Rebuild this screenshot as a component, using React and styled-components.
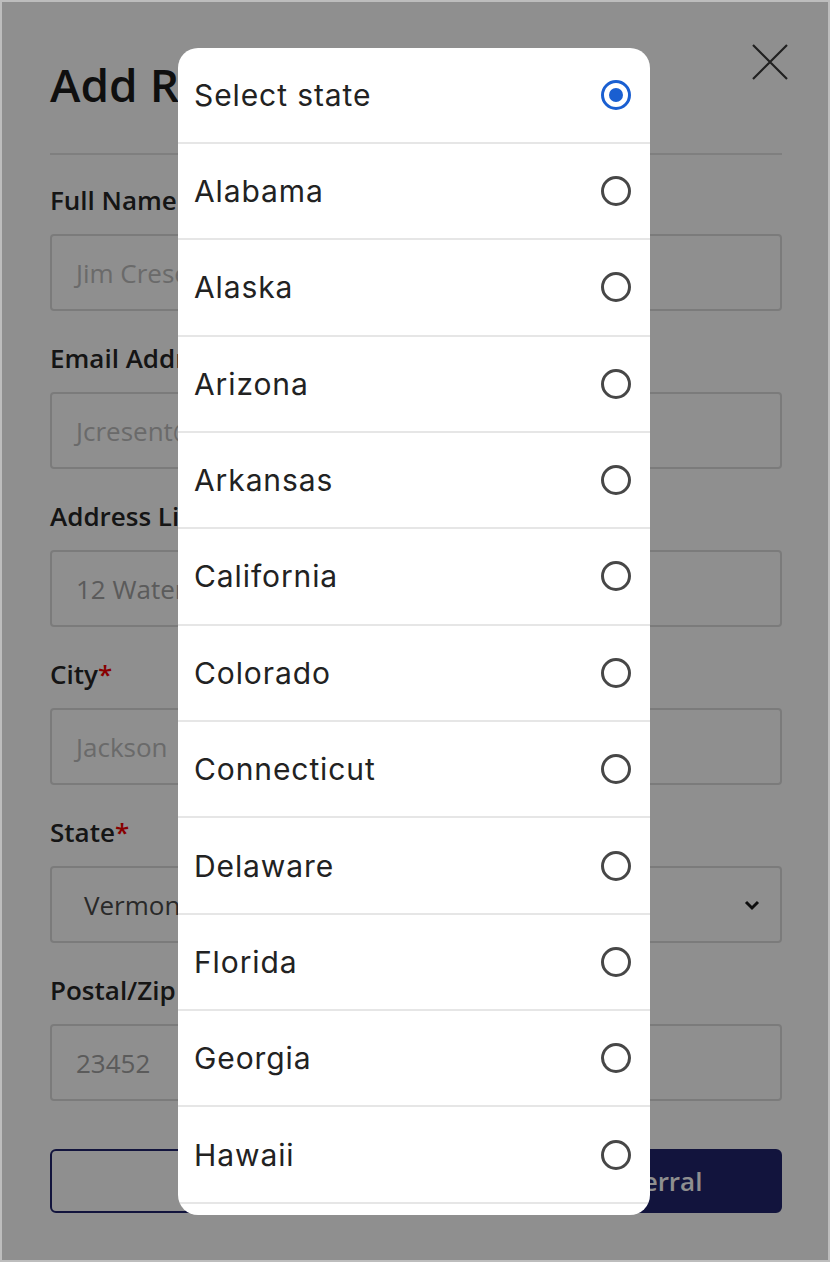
import React, { useState } from 'react';
import styled, { createGlobalStyle } from 'styled-components';

const GlobalStyle = createGlobalStyle`
  * { box-sizing: border-box; }
  body {
    margin: 0;
    background: #ffffff;
    font-family: 'Open Sans', 'Noto Sans', sans-serif;
  }
`;

const STATES = [
  'Alabama', 'Alaska', 'Arizona', 'Arkansas', 'California', 'Colorado',
  'Connecticut', 'Delaware', 'Florida', 'Georgia', 'Hawaii', 'Idaho',
  'Illinois', 'Indiana', 'Iowa', 'Kansas', 'Kentucky', 'Louisiana', 'Maine',
  'Maryland', 'Massachusetts', 'Michigan', 'Minnesota', 'Mississippi',
  'Missouri', 'Montana', 'Nebraska', 'Nevada', 'New Hampshire', 'New Jersey',
  'New Mexico', 'New York', 'North Carolina', 'North Dakota', 'Ohio',
  'Oklahoma', 'Oregon', 'Pennsylvania', 'Rhode Island', 'South Carolina',
  'South Dakota', 'Tennessee', 'Texas', 'Utah', 'Vermont', 'Virginia',
  'Washington', 'West Virginia', 'Wisconsin', 'Wyoming',
];

const FIELDS = [
  { label: 'Full Name', placeholder: 'Jim Cresent' },
  { label: 'Email Address', placeholder: 'Jcresent@gmail.com' },
  { label: 'Address Line 1', placeholder: '12 Waterfront Street', filled: true },
  { label: 'City', placeholder: 'Jackson', required: true },
];

const Frame = styled.div`
  position: relative;
  width: 830px;
  height: 1262px;
  border: 2px solid #bdbdbd;
  overflow: hidden;
  background: #ffffff;
`;

const Page = styled.div`
  padding: 42px 46px 0 48px;
`;

const Header = styled.div`
  display: flex;
  justify-content: space-between;
  align-items: flex-start;
`;

const Title = styled.h1`
  margin: 10px 0 0;
  font-size: 46px;
  line-height: 60px;
  font-weight: 600;
  color: #1c1c1c;
`;

const CloseButton = styled.button`
  margin-right: -6px;
  padding: 0;
  border: 0;
  background: none;
  width: 36px;
  height: 36px;
  display: flex;
`;

const Rule = styled.hr`
  margin: 39px 0 0;
  border: 0;
  border-top: 2px solid #e2e2e2;
`;

const Form = styled.div`
  padding-top: 27px;
`;

const Field = styled.div`
  margin-bottom: 29px;
`;

const Label = styled.label`
  display: block;
  font-size: 26px;
  line-height: 36px;
  font-weight: 600;
  color: #262626;
  margin-bottom: 16px;
`;

const Star = styled.span`
  color: #f20000;
`;

const Input = styled.div`
  height: 77px;
  border: 2px solid #dcdcdc;
  border-radius: 4px;
  display: flex;
  align-items: center;
  padding: 0 24px;
  font-size: 26px;
  color: ${(p) => (p.$filled ? '#a2a2a2' : '#bdbdbd')};
`;

const Select = styled(Input)`
  justify-content: space-between;
  padding: 0 20px 0 32px;
  color: #4a4a4a;
`;

const Actions = styled.div`
  display: flex;
  gap: 20px;
  margin-top: 48px;
`;

const Button = styled.button`
  flex: 1;
  height: 64px;
  border-radius: 6px;
  border: 2px solid #20246d;
  background: ${(p) => (p.$primary ? '#20246d' : '#ffffff')};
  color: ${(p) => (p.$primary ? '#ffffff' : '#20246d')};
  font-family: 'Open Sans', sans-serif;
  font-size: 26px;
  font-weight: 600;
`;

const Overlay = styled.div`
  position: absolute;
  inset: 0;
  background: rgba(0, 0, 0, 0.44);
  display: flex;
  align-items: center;
  justify-content: center;
`;

const Sheet = styled.div`
  width: 472px;
  height: 1167px;
  margin-right: 2px;
  background: #ffffff;
  border-radius: 20px;
  overflow-y: auto;
  scrollbar-width: none;
  &::-webkit-scrollbar { display: none; }
`;

const Option = styled.div`
  height: 96.36px;
  border-bottom: 2px solid #e6e6e6;
  display: flex;
  align-items: center;
  justify-content: space-between;
  padding: 0 19px 0 16px;
  font-family: 'Inter', 'Noto Sans', sans-serif;
  font-size: 30px;
  letter-spacing: 0.9px;
  color: #222222;
  cursor: pointer;
`;

function Radio({ checked }) {
  const color = checked ? '#1a5fd1' : '#474747';
  return (
    <svg width="30" height="30" viewBox="0 0 30 30">
      <circle cx="15" cy="15" r="13.5" fill="none" stroke={color} strokeWidth="3" />
      {checked && <circle cx="15" cy="15" r="7" fill={color} />}
    </svg>
  );
}

function App() {
  const [selected, setSelected] = useState('');

  return (
    <>
      <GlobalStyle />
      <Frame>
        <Page>
          <Header>
            <Title>Add Referral</Title>
            <CloseButton aria-label="Close">
              <svg width="36" height="36" viewBox="0 0 36 36">
                <path d="M1 1 L35 35 M35 1 L1 35" stroke="#3a3a3a" strokeWidth="2.2" />
              </svg>
            </CloseButton>
          </Header>
          <Rule />
          <Form>
            {FIELDS.map((f) => (
              <Field key={f.label}>
                <Label>
                  {f.label}
                  {f.required && <Star>*</Star>}
                </Label>
                <Input $filled={f.filled}>{f.placeholder}</Input>
              </Field>
            ))}
            <Field>
              <Label>
                State<Star>*</Star>
              </Label>
              <Select>
                Vermont
                <svg width="16" height="12" viewBox="0 0 16 12">
                  <path d="M2 3 L8 9 L14 3" fill="none" stroke="#1a1a1a" strokeWidth="3" />
                </svg>
              </Select>
            </Field>
            <Field>
              <Label>Postal/Zip Code</Label>
              <Input $filled>23452</Input>
            </Field>
            <Actions>
              <Button>Cancel</Button>
              <Button $primary>Submit Referral</Button>
            </Actions>
          </Form>
        </Page>
        <Overlay>
          <Sheet>
            <Option onClick={() => setSelected('')}>
              Select state
              <Radio checked={selected === ''} />
            </Option>
            {STATES.map((s) => (
              <Option key={s} onClick={() => setSelected(s)}>
                {s}
                <Radio checked={selected === s} />
              </Option>
            ))}
          </Sheet>
        </Overlay>
      </Frame>
    </>
  );
}

export default App;
